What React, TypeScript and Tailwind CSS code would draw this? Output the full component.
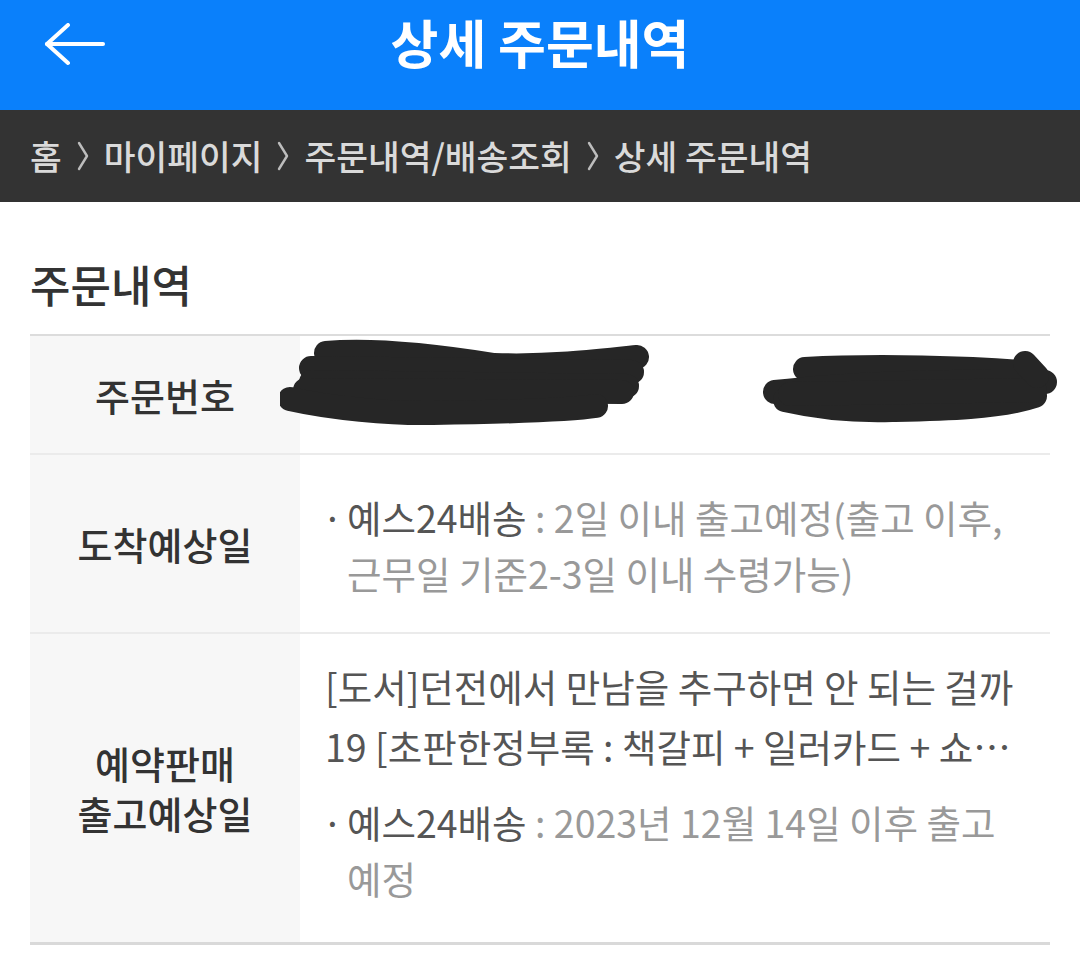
import React from "react";

function Chevron() {
  return (
    <svg width="14" height="32" viewBox="0 0 14 32" className="mx-[14px] shrink-0">
      <polyline
        points="3,3 11,16 3,29"
        fill="none"
        stroke="#bdbdbd"
        strokeWidth="2.4"
        strokeLinecap="round"
        strokeLinejoin="round"
      />
    </svg>
  );
}

function Scribble() {
  return (
    <svg
      width="780"
      height="117"
      viewBox="0 0 780 117"
      className="absolute left-[-20px] top-0"
    >
      <g fill="none" stroke="#262626" strokeWidth="24" strokeLinecap="round" strokeLinejoin="round">
        <path d="M46 17 C 100 12, 170 22, 214 29 C 270 31, 320 25, 357 21" />
        <path d="M31 32 L 352 36" />
        <path d="M31 46 L 347 50" />
        <path d="M25 54 L 342 56" />
        <path d="M10 63 C 50 72, 110 78, 153 77 C 220 76, 290 74, 316 70" />
        <path d="M525 33 C 600 29, 690 32, 740 36" />
        <path d="M495 56 C 570 47, 680 44, 765 46" />
        <path d="M505 64 C 540 72, 580 75, 612 74 C 660 73, 720 72, 755 60" />
        <path d="M510 58 L 755 54" />
        <path d="M745 27 L 757 40" />
      </g>
    </svg>
  );
}

function Bullet({ label, children }: { label: string; children: React.ReactNode }) {
  return (
    <div className="flex leading-[56px]">
      <span className="w-[25px] shrink-0 text-[#555]">·</span>
      <p className="text-[#999]">
        <span className="text-[#555]">{label}</span> : {children}
      </p>
    </div>
  );
}

export default function App() {
  return (
    <div className="w-[1080px] min-h-[966px] bg-white font-['Noto_Sans_CJK_KR',sans-serif]">
      <header className="relative h-[110px] bg-[#0a80fb] flex items-center justify-center">
        <svg width="64" height="44" viewBox="0 0 64 44" className="absolute left-[43px] top-[23px]">
          <g fill="none" stroke="#fff" strokeWidth="4" strokeLinecap="round" strokeLinejoin="round">
            <path d="M4 21 H 60" />
            <path d="M25 2 L 4 21 L 25 40" />
          </g>
        </svg>
        <h1 className="text-white text-[52px] font-bold mt-[-26px]">상세 주문내역</h1>
      </header>

      <nav className="h-[92px] bg-[#333333] flex items-center px-[30px] text-[34.5px] font-medium text-[#dadada]">
        <span>홈</span>
        <Chevron />
        <span>마이페이지</span>
        <Chevron />
        <span>주문내역/배송조회</span>
        <Chevron />
        <span>상세 주문내역</span>
      </nav>

      <section className="px-[30px] pt-[52px]">
        <h2 className="text-[44px] font-medium text-[#333] leading-[60px] mb-[20px]">주문내역</h2>

        <div className="border-t-2 border-b-[3px] border-t-[#dcdcdc] border-b-[#d9d9d9] text-[37.5px]">
          <div className="grid grid-cols-[270px_1fr] h-[119px] border-b-2 border-[#ebebeb]">
            <div className="bg-[#f7f7f7] flex items-center justify-center text-[38px] font-medium text-[#333]">
              주문번호
            </div>
            <div className="relative">
              <Scribble />
            </div>
          </div>

          <div className="grid grid-cols-[270px_1fr] border-b-2 border-[#ebebeb]">
            <div className="bg-[#f7f7f7] flex items-center justify-center text-[38px] font-medium text-[#333]">
              도착예상일
            </div>
            <div className="pl-[22px] pr-[30px] pt-[34px] pb-[31px]">
              <Bullet label="예스24배송">2일 이내 출고예정(출고 이후, 근무일 기준2-3일 이내 수령가능)</Bullet>
            </div>
          </div>

          <div className="grid grid-cols-[270px_1fr]">
            <div className="bg-[#f7f7f7] flex flex-col items-center justify-center text-[38px] font-medium text-[#333] leading-[50px]">
              <span>예약판매</span>
              <span>출고예상일</span>
            </div>
            <div className="pl-[22px] pr-[30px] pt-[22px] pb-[36px]">
              <p className="pl-[3px] text-[#555] leading-[60px] line-clamp-2 mb-[18px]">
                [도서]던전에서 만남을 추구하면 안 되는 걸까 19 [초판한정부록 : 책갈피 + 일러카드 + 쇼트스토리 소책자]
              </p>
              <Bullet label="예스24배송">2023년 12월 14일 이후 출고예정</Bullet>
            </div>
          </div>
        </div>
      </section>
    </div>
  );
}
